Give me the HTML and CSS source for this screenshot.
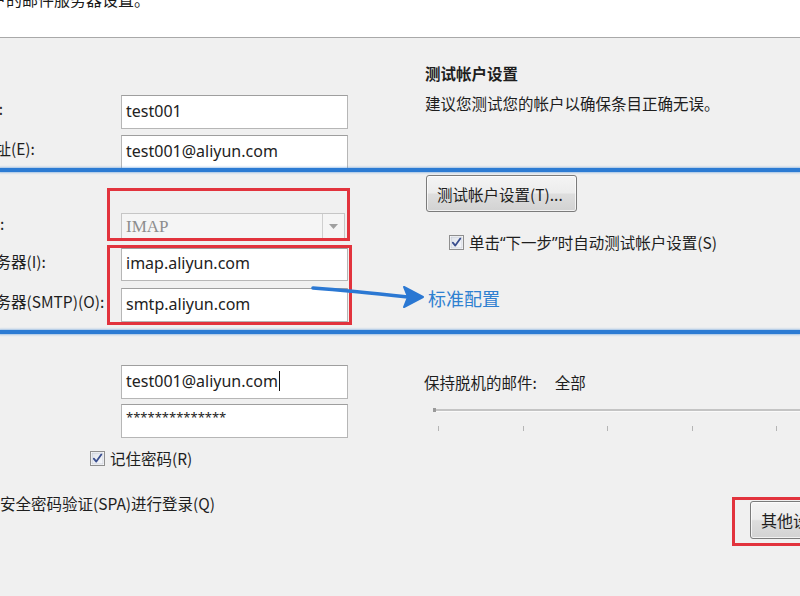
FILE: index.html
```html
<!DOCTYPE html>
<html lang="zh-CN">
<head>
<meta charset="utf-8">
<title>帐户设置</title>
<link rel="stylesheet" href="styles.css">
</head>
<body>
<div class="page">
  <header class="header">
    <p class="subtitle">输入帐户的邮件服务器设置。</p>
  </header>
  <main class="content">
    <section class="left">
      <div class="row r1"><span class="label">您的姓名(Y):</span><div class="field">test001</div></div>
      <div class="row r2"><span class="label">电子邮件地址(E):</span><div class="field">test001@aliyun.com</div></div>
      <div class="row r3"><span class="label">帐户类型(A):</span>
        <div class="combo"><span class="combo-text">IMAP</span><span class="combo-btn"><svg width="9" height="5" viewBox="0 0 9 5"><path d="M0 0H9L4.5 5Z" fill="#a0a0a0"/></svg></span></div>
      </div>
      <div class="row r4"><span class="label">接收邮件服务器(I):</span><div class="field">imap.aliyun.com</div></div>
      <div class="row r5"><span class="label">发送邮件服务器(SMTP)(O):</span><div class="field">smtp.aliyun.com</div></div>
      <div class="row r6"><span class="label">用户名(U):</span><div class="field">test001@aliyun.com<span class="caret"></span></div></div>
      <div class="row r7"><span class="label">密码(P):</span><div class="field pwd">**************</div></div>
      <div class="row remember">
        <svg class="cb" width="15" height="15" viewBox="0 0 15 15"><defs><linearGradient id="g1" x1="0" y1="0" x2="1" y2="1"><stop offset="0" stop-color="#dfe3ea"/><stop offset="1" stop-color="#f7f8fb"/></linearGradient></defs><rect x="0.5" y="0.5" width="14" height="14" fill="#fff" stroke="#8f8f8f"/><rect x="2" y="2" width="11" height="11" fill="url(#g1)" stroke="#b8bfcc" stroke-width="0.6"/><path d="M3.8 7.6L6.3 10.6L11.3 3.6" fill="none" stroke="#3a4f8f" stroke-width="1.8" stroke-linecap="round" stroke-linejoin="round"/></svg>
        <span class="cb-text">记住密码(R)</span>
      </div>
      <div class="row spa">
        <svg class="cb" width="15" height="15" viewBox="0 0 15 15"><rect x="0.5" y="0.5" width="14" height="14" fill="#fff" stroke="#8f8f8f"/></svg>
        <span class="cb-text">要求使用安全密码验证(SPA)进行登录(Q)</span>
      </div>
    </section>
    <section class="right">
      <h3 class="r-title">测试帐户设置</h3>
      <p class="r-desc">建议您测试您的帐户以确保条目正确无误。</p>
      <button class="btn test-btn" type="button">测试帐户设置(T)...</button>
      <div class="check-row">
        <svg class="cb" width="15" height="15" viewBox="0 0 15 15"><defs><linearGradient id="g2" x1="0" y1="0" x2="1" y2="1"><stop offset="0" stop-color="#dfe3ea"/><stop offset="1" stop-color="#f7f8fb"/></linearGradient></defs><rect x="0.5" y="0.5" width="14" height="14" fill="#fff" stroke="#8f8f8f"/><rect x="2" y="2" width="11" height="11" fill="url(#g2)" stroke="#b8bfcc" stroke-width="0.6"/><path d="M3.8 7.6L6.3 10.6L11.3 3.6" fill="none" stroke="#3a4f8f" stroke-width="1.8" stroke-linecap="round" stroke-linejoin="round"/></svg>
        <span class="cb-text">单击<span class="q">“</span>下一步<span class="q">”</span>时自动测试帐户设置(S)</span>
      </div>
      <div class="std-link">标准配置</div>
      <div class="offline"><span>保持脱机的邮件:</span><span class="offline-val">全部</span></div>
      <div class="slider">
        <div class="track"><span class="thumb"></span></div>
        <div class="ticks"><span></span><span></span><span></span><span></span><span></span></div>
      </div>
      <button class="btn more-btn" type="button">其他设置(M)...</button>
    </section>
  </main>

  <div class="hl hl-1"></div>
  <div class="hl hl-2"></div>
  <div class="redbox box-1"></div>
  <div class="redbox box-2"></div>
  <div class="redbox box-3"></div>
  <svg class="arrow" width="130" height="34" viewBox="0 0 130 34">
    <path d="M13 8 C40 10 80 14 108 17" fill="none" stroke="#2b78d3" stroke-width="3.6" stroke-linecap="round"/>
    <path d="M104 7 L123 17 L104 27 L108 17 Z" fill="#2b78d3" stroke="#2b78d3" stroke-width="2" stroke-linejoin="round"/>
  </svg>
</div>
</body>
</html>
```

FILE: styles.css
```css
* { box-sizing: border-box; }
html, body { margin: 0; padding: 0; }
body {
  width: 800px;
  height: 596px;
  overflow: hidden;
  background: #f0f0f0;
  font-family: "Noto Sans CJK SC", "Noto Sans", sans-serif;
  font-size: 15.5px;
  color: #1e1e1e;
}
.page {
  position: relative;
  width: 800px;
  height: 596px;
  overflow: hidden;
}
.header {
  height: 38px;
  background: #fff;
  border-bottom: 1px solid #a9a9a9;
  overflow: hidden;
}
.subtitle {
  margin: -11px 0 0 -58px;
  font-size: 16px;
  line-height: 20px;
  white-space: nowrap;
  color: #1a1a1a;
}
.content { display: flex; }

/* left column */
.left {
  flex: none;
  width: 507px;
  margin-left: -82px;
  padding-top: 57px;
  display: flex;
  flex-direction: column;
}
.row { display: flex; align-items: center; }
.label {
  flex: none;
  width: 203px;
  white-space: nowrap;
  padding-bottom: 8px;
  line-height: 20px;
}
.field {
  width: 227px;
  height: 34px;
  background: #fff;
  border: 1px solid #b6b6b6;
  border-top-color: #9e9e9e;
  padding: 0 0 3px 4px;
  display: flex;
  align-items: center;
  font-family: "Noto Sans", "Noto Sans CJK SC", sans-serif;
  font-size: 16px;
  color: #222;
  white-space: nowrap;
}
.caret {
  display: inline-block;
  width: 1px;
  height: 20px;
  background: #111;
  margin-left: 1px;
}
.field.pwd {
  align-items: flex-start;
  padding-top: 3px;
  font-size: 13px;
  line-height: 18px;
}
.r1 { height: 34px; }
.r2 { margin-top: 6px; height: 34px; }
.r3 { margin-top: 44px; height: 27px; }
.r4 { margin-top: 8px; height: 33px; }
.r4 .field { height: 33px; }
.r5 { margin-top: 7px; height: 34px; }
.r6 { margin-top: 43px; height: 34px; }
.r7 { margin-top: 5px; height: 34px; }
.combo {
  width: 224px;
  height: 27px;
  border: 1px solid #c6c6c6;
  background: #f5f5f5;
  display: flex;
  align-items: center;
}
.combo-text {
  flex: 1;
  padding-left: 4px;
  font-family: "Liberation Serif", serif;
  font-size: 17px;
  color: #8d8d8d;
}
.combo-btn {
  width: 22px;
  height: 100%;
  border-left: 1px solid #cfcfcf;
  display: flex;
  align-items: center;
  justify-content: center;
}
.remember {
  margin-top: 12px;
  height: 16px;
  padding-left: 172px;
}
.spa {
  margin-top: 27px;
  height: 20px;
}
.cb { flex: none; display: block; }
.cb-text { margin-left: 5px; white-space: nowrap; line-height: 20px; }
.q { font-family: "Noto Sans", sans-serif; }

/* right column */
.right {
  flex: none;
  width: 375px;
  padding-top: 25px;
  display: flex;
  flex-direction: column;
  align-items: flex-start;
}
.r-title {
  margin: 0;
  font-size: 15.5px;
  font-weight: bold;
  line-height: 20px;
  height: 20px;
}
.r-desc {
  margin: 10px 0 0;
  line-height: 20px;
  height: 20px;
  white-space: nowrap;
}
.btn {
  font-family: "Noto Sans CJK SC", "Noto Sans", sans-serif;
  font-size: 15.5px;
  color: #1e1e1e;
  border: 1px solid #7b7b7b;
  border-radius: 3px;
  background: linear-gradient(#f4f4f4 0%, #ececec 48%, #dedede 52%, #d2d2d2 100%);
  box-shadow: inset 0 0 0 1px rgba(255,255,255,0.7);
  text-align: left;
  white-space: nowrap;
  padding: 0 10px;
}
.test-btn {
  margin: 62px 0 0 1px;
  width: 151px;
  height: 37px;
}
.check-row {
  margin-top: 20px;
  height: 20px;
  padding-left: 24px;
  display: flex;
  align-items: center;
}
.std-link {
  margin-top: 36px;
  height: 20px;
  line-height: 20px;
  padding-left: 3px;
  font-size: 18px;
  color: #2f80d0;
  white-space: nowrap;
}
.offline {
  margin-top: 64px;
  height: 20px;
  line-height: 20px;
  margin-left: -1px;
  white-space: nowrap;
}
.offline-val { margin-left: 18px; }
.slider {
  width: 400px;
  height: 30px;
  margin-top: 12px;
  padding-left: 8px;
}
.track {
  position: relative;
  margin-top: 5px;
  height: 3px;
  background: #c4c4c4;
  border-bottom: 1px solid #fafafa;
}
.thumb {
  position: absolute;
  left: 0;
  top: -1px;
  width: 3px;
  height: 4px;
  background: #9a9a9a;
}
.ticks {
  margin-top: 14px;
  display: flex;
  gap: 80px;
  padding-left: 5px;
}
.ticks span {
  width: 1px;
  height: 5px;
  background: #b5b5b5;
  margin-right: 3.5px;
}
.more-btn {
  margin: 67px 0 0 325px;
  width: 120px;
  height: 38px;
  font-size: 16px;
}

/* annotation overlays */
.hl {
  position: absolute;
  left: 0;
  width: 800px;
  height: 4px;
  background: #2c7bd3;
  box-shadow: 0 0 2px 1px rgba(70, 140, 215, 0.45);
}
.hl-1 { top: 168px; }
.hl-2 { top: 330px; }
.redbox {
  position: absolute;
  border: 3px solid #e2333d;
}
.box-1 { left: 107px; top: 188px; width: 243px; height: 53px; }
.box-2 { left: 107px; top: 245px; width: 245px; height: 80px; }
.box-3 { left: 732px; top: 497px; width: 90px; height: 49px; }
.arrow {
  position: absolute;
  left: 300px;
  top: 280px;
}
```
